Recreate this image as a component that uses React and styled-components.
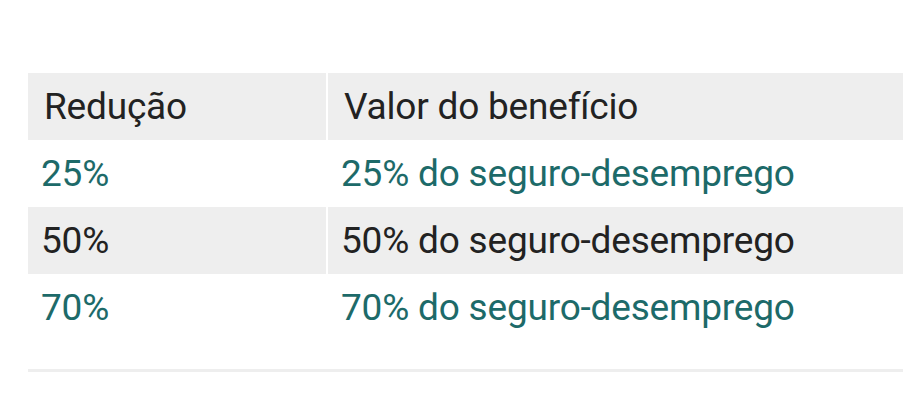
import React from 'react';
import styled, { createGlobalStyle } from 'styled-components';

const GlobalStyle = createGlobalStyle`
  html, body {
    margin: 0;
    padding: 0;
    background: #ffffff;
    overflow: hidden;
  }
`;

const Page = styled.div`
  padding: 73px 0 0 28px;
  width: 903px;
  box-sizing: border-box;
  font-family: Roboto, "Liberation Sans", sans-serif;
`;

const Wrap = styled.div`
  width: 890px;
  padding-bottom: 28px;
  border-bottom: 3px solid #eeeeee;
`;

const Table = styled.table`
  width: 100%;
  border-collapse: collapse;
  table-layout: fixed;
`;

const Row = styled.tr`
  height: 67px;
  background: ${p => (p.$shaded ? '#eeeeee' : 'transparent')};
`;

const HeadCell = styled.th`
  text-align: left;
  font-weight: 400;
  font-size: 37px;
  letter-spacing: -0.2px;
  color: #222222;
  padding: 0 0 0 16px;
  border-left: ${p => (p.$first ? 'none' : '2px solid #ffffff')};
  width: ${p => (p.$first ? '282px' : 'auto')};
`;

const Cell = styled.td`
  font-size: 37px;
  letter-spacing: -0.2px;
  color: ${p => (p.$accent ? '#1d6a69' : '#222222')};
  padding: 0 0 0 13px;
  border-left: ${p => (p.$first ? 'none' : '2px solid #ffffff')};
  white-space: nowrap;
`;

const rows = [
  { cut: '25%', value: '25% do seguro-desemprego' },
  { cut: '50%', value: '50% do seguro-desemprego' },
  { cut: '70%', value: '70% do seguro-desemprego' },
];

export default function App() {
  return (
    <Page>
      <GlobalStyle />
      <Wrap>
        <Table>
          <thead>
            <Row $shaded>
              <HeadCell $first>Redução</HeadCell>
              <HeadCell>Valor do benefício</HeadCell>
            </Row>
          </thead>
          <tbody>
            {rows.map((r, i) => {
              const shaded = i % 2 === 1;
              return (
                <Row key={r.cut} $shaded={shaded}>
                  <Cell $first $accent={!shaded}>{r.cut}</Cell>
                  <Cell $accent={!shaded}>{r.value}</Cell>
                </Row>
              );
            })}
          </tbody>
        </Table>
      </Wrap>
    </Page>
  );
}
